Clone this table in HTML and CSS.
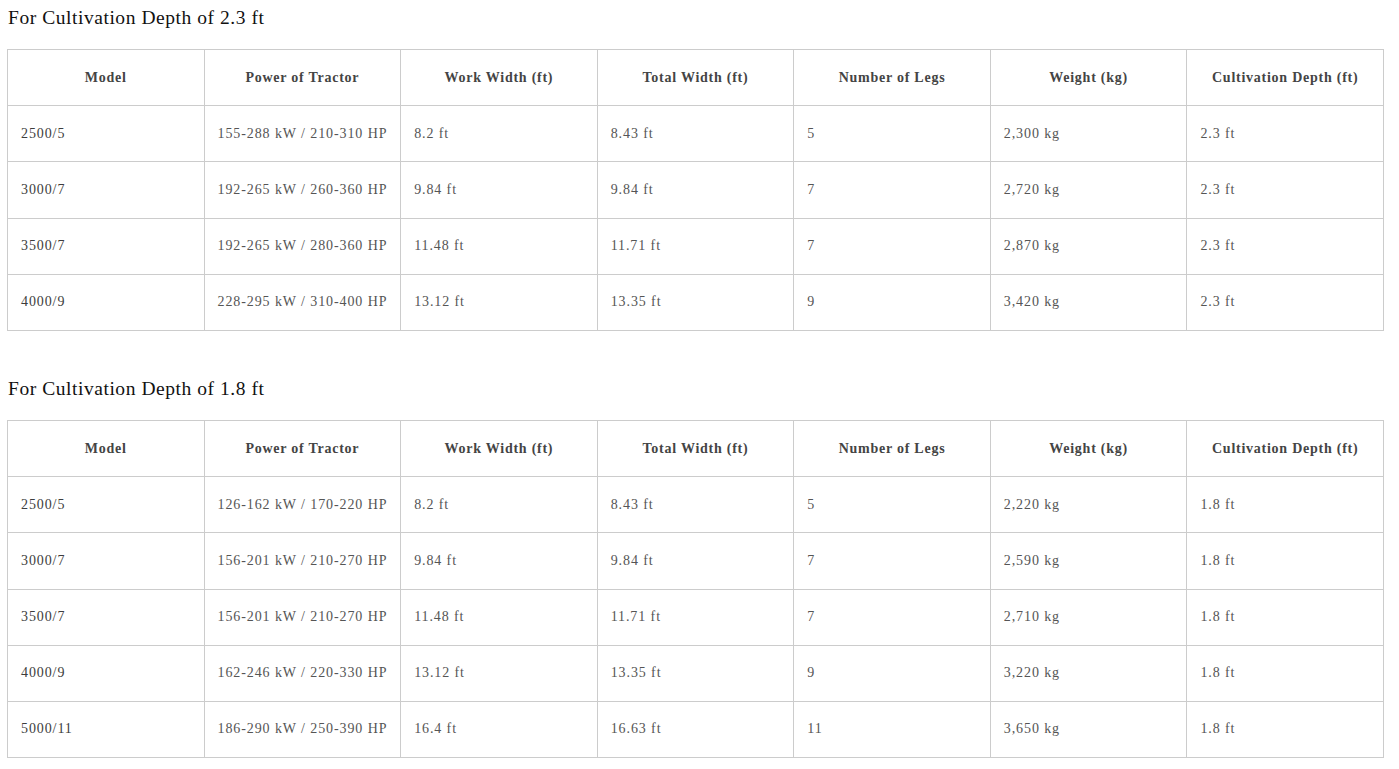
FILE: index.html
```html
<!DOCTYPE html>
<html>
<head>
<meta charset="utf-8">
<link rel="stylesheet" href="styles.css">
</head>
<body>
<div class="page">
  <section class="spec">
    <h2 class="spec-title">For Cultivation Depth of 2.3 ft</h2>
    <table class="spec-table">
      <thead>
        <tr><th>Model</th><th>Power of Tractor</th><th>Work Width (ft)</th><th>Total Width (ft)</th><th>Number of Legs</th><th>Weight (kg)</th><th>Cultivation Depth (ft)</th></tr>
      </thead>
      <tbody>
        <tr><td>2500/5</td><td>155-288 kW / 210-310 HP</td><td>8.2 ft</td><td>8.43 ft</td><td>5</td><td>2,300 kg</td><td>2.3 ft</td></tr>
        <tr><td>3000/7</td><td>192-265 kW / 260-360 HP</td><td>9.84 ft</td><td>9.84 ft</td><td>7</td><td>2,720 kg</td><td>2.3 ft</td></tr>
        <tr><td>3500/7</td><td>192-265 kW / 280-360 HP</td><td>11.48 ft</td><td>11.71 ft</td><td>7</td><td>2,870 kg</td><td>2.3 ft</td></tr>
        <tr><td>4000/9</td><td>228-295 kW / 310-400 HP</td><td>13.12 ft</td><td>13.35 ft</td><td>9</td><td>3,420 kg</td><td>2.3 ft</td></tr>
      </tbody>
    </table>
  </section>
  <section class="spec">
    <h2 class="spec-title">For Cultivation Depth of 1.8 ft</h2>
    <table class="spec-table">
      <thead>
        <tr><th>Model</th><th>Power of Tractor</th><th>Work Width (ft)</th><th>Total Width (ft)</th><th>Number of Legs</th><th>Weight (kg)</th><th>Cultivation Depth (ft)</th></tr>
      </thead>
      <tbody>
        <tr><td>2500/5</td><td>126-162 kW / 170-220 HP</td><td>8.2 ft</td><td>8.43 ft</td><td>5</td><td>2,220 kg</td><td>1.8 ft</td></tr>
        <tr><td>3000/7</td><td>156-201 kW / 210-270 HP</td><td>9.84 ft</td><td>9.84 ft</td><td>7</td><td>2,590 kg</td><td>1.8 ft</td></tr>
        <tr><td>3500/7</td><td>156-201 kW / 210-270 HP</td><td>11.48 ft</td><td>11.71 ft</td><td>7</td><td>2,710 kg</td><td>1.8 ft</td></tr>
        <tr><td>4000/9</td><td>162-246 kW / 220-330 HP</td><td>13.12 ft</td><td>13.35 ft</td><td>9</td><td>3,220 kg</td><td>1.8 ft</td></tr>
        <tr><td>5000/11</td><td>186-290 kW / 250-390 HP</td><td>16.4 ft</td><td>16.63 ft</td><td>11</td><td>3,650 kg</td><td>1.8 ft</td></tr>
      </tbody>
    </table>
  </section>
</div>
</body>
</html>
```
FILE: styles.css
```css
html, body {
  margin: 0;
  padding: 0;
  background: #fff;
}
body {
  font-family: "Liberation Serif", "Times New Roman", serif;
  color: #555;
}
.page {
  padding: 6px 15px 0 7px;
}
.spec {
  margin-bottom: 46px;
}
.spec-title {
  margin: 0 0 19px 1px;
  font-size: 19.5px;
  line-height: 24px;
  letter-spacing: 0.55px;
  font-weight: normal;
  color: #111;
}
.spec-table {
  width: 1377px;
  border-collapse: collapse;
  table-layout: fixed;
  font-size: 14px;
}
.spec-table th,
.spec-table td {
  border: 1px solid #ccc;
  height: 55.2px;
  padding: 0 8px 0 13px;
  vertical-align: middle;
  line-height: 20px;
  white-space: nowrap;
}
.spec-table th {
  text-align: center;
  padding: 0 10px;
  font-weight: bold;
  color: #444;
  letter-spacing: 0.75px;
}
.spec-table td {
  text-align: left;
  color: #555;
  letter-spacing: 0.9px;
}
.spec-table td:first-child {
  color: #3d3d3d;
}
```
